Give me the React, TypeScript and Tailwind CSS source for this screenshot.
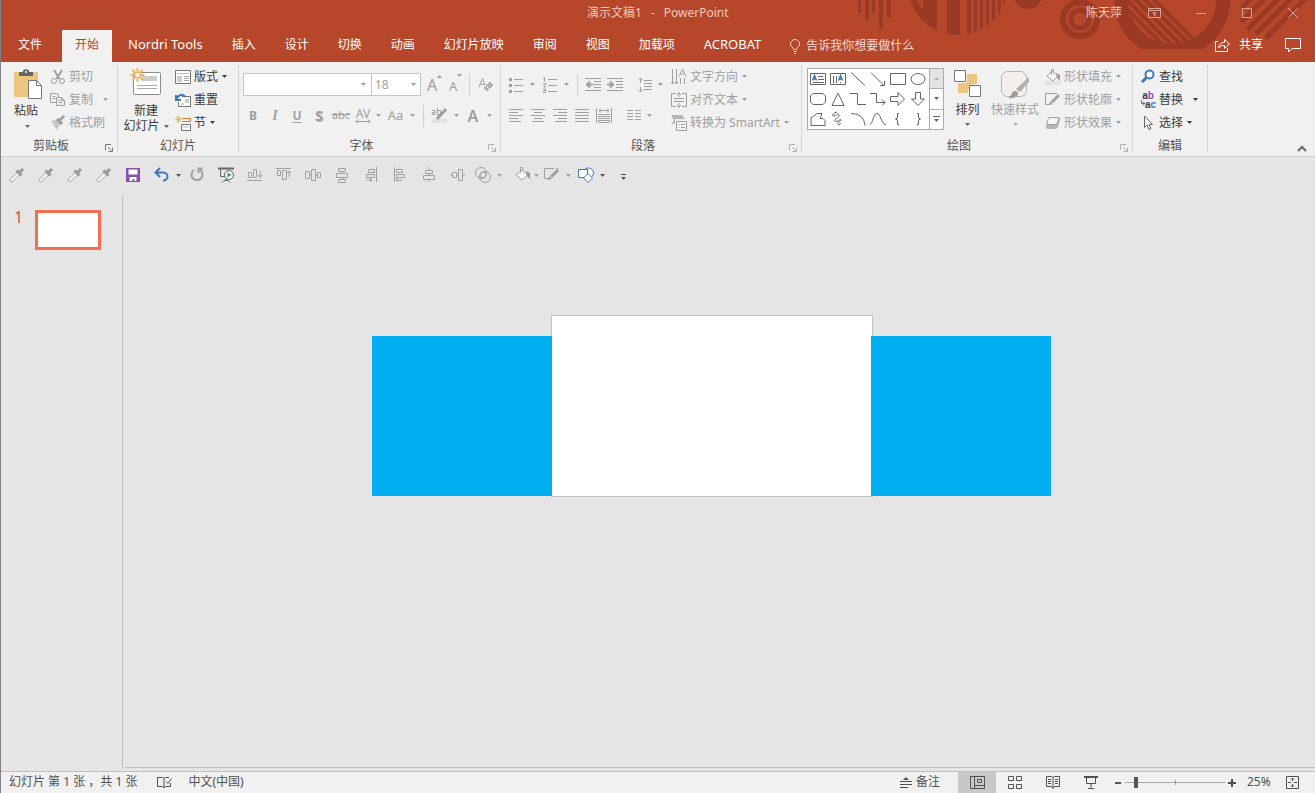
import type { ReactNode } from "react";

const tabs = ["Nordri Tools", "插入", "设计", "切换", "动画", "幻灯片放映", "审阅", "视图", "加载项", "ACROBAT"];

type IconProps = { w?: number; h?: number; className?: string; children: ReactNode };

function Icon({ w = 16, h = 16, className = "", children }: IconProps) {
  return (
    <svg width={w} height={h} viewBox={`0 0 ${w} ${h}`} fill="none" stroke="currentColor" className={`shrink-0 ${className}`} aria-hidden="true">
      {children}
    </svg>
  );
}

function Caret({ className = "" }: { className?: string }) {
  return (
    <Icon w={5} h={3} className={className}>
      <path d="M0 0h5L2.500 3z" fill="currentColor" stroke="none" />
    </Icon>
  );
}

function Small({ icon, label, caret, disabled, caretGap = "ml-1" }: { icon: ReactNode; label: string; caret?: boolean; disabled?: boolean; caretGap?: string }) {
  return (
    <button className={`flex h-[23px] items-center whitespace-nowrap ${disabled ? "text-[#a0a0a0]" : "text-[#3b3b3b]"}`}>
      {icon}
      <span className="ml-[3px]">{label}</span>
      {caret && <Caret className={caretGap} />}
    </button>
  );
}

function Group({ title, width, launcher, children }: { title: string; width: string; launcher?: "dark" | "light"; children: ReactNode }) {
  return (
    <section className={`flex shrink-0 flex-col border-r border-[#d4d4d4] ${width}`}>
      <div className="flex h-[69px]">{children}</div>
      <div className="mt-[2px] flex h-4 items-center">
        <span className={`flex-1 pt-1 text-center text-[#555] ${launcher ? "pr-1" : ""}`}>{title}</span>
        {launcher && (
          <button aria-label={`${title}设置`} className={`mr-1 mt-2 w-2 ${launcher === "dark" ? "text-[#777]" : "text-[#b0b0b0]"}`}>
            <Icon w={8} h={8}>
              <path d="M.5 6V.5H6M3 3l3.500 3.500M7.500 3.500v4h-4" />
            </Icon>
          </button>
        )}
      </div>
    </section>
  );
}

function Bar() {
  return <span className="h-[22px] w-px shrink-0 bg-[#d0d0d0]" />;
}

function Tool({ label, width = "w-[22px]", children }: { label: string; width?: string; children: ReactNode }) {
  return (
    <button aria-label={label} className={`flex h-[22px] shrink-0 items-center justify-center ${width}`}>
      {children}
    </button>
  );
}

function HeaderArt() {
  return (
    <svg width="465" height="50" viewBox="850 0 465 50" className="absolute right-0 top-0 text-[#9b3a24]" fill="currentColor" aria-hidden="true">
      <defs>
        <clipPath id="disc">
          <circle cx="958" cy="-15" r="50" />
        </clipPath>
        <clipPath id="ring">
          <circle cx="1172" cy="0" r="46" />
        </clipPath>
        <clipPath id="flat">
          <path d="M1100 0h140v49h-140z" />
        </clipPath>
      </defs>
      <path d="M858 0h3v13h-3zM865 0h4v21h-4zM872 0h3v13h-3zM879 0h4v29h-4zM887 0h4v18h-4z" />
      <g clipPath="url(#disc)">
        <path d="M909 0h7l7 10V0h14v40h-30zM947 0h13v40h-13zM967 0h4v40h-4zM974 0h3v40h-3zM980 0h3v40h-3zM986 0h3v40h-3zM992 0h3v40h-3zM998 0h3v40h-3zM1003 0h3v40h-3z" />
      </g>
      <circle cx="1028" cy="-5" r="14" />
      <g fill="none" stroke="currentColor">
        <circle cx="1080" cy="19" r="17" strokeWidth="6" />
        <circle cx="1080" cy="19" r="9" strokeWidth="5" />
        <g clipPath="url(#flat)">
          <circle cx="1172" cy="0" r="51" strokeWidth="14" />
        </g>
        <g clipPath="url(#ring)" strokeWidth="4">
          <path d="M1112-6l56 56M1121-6l56 56M1130-6l56 56M1139-6l56 56M1148-6l56 56" />
        </g>
        <path d="M1254-4l-12 12M1267-4l-26 26M1281-4l-34 34M1294-4l-38 38M1308-4l-42 42" strokeWidth="5" />
      </g>
    </svg>
  );
}

function Header() {
  return (
    <header className="relative bg-[#b7472a] text-white">
      <HeaderArt />
      <div className="relative flex h-[26px] items-center text-[#f3c9bc]">
        <h1 className="flex flex-1 gap-[9px] pl-[586px]">
          <span>演示文稿1</span>
          <span>-</span>
          <span>PowerPoint</span>
        </h1>
        <span className="mr-[26px]">陈天萍</span>
        <div className="flex items-center gap-[34px] pr-4 text-[#d9a393]">
          <button aria-label="功能区显示选项">
            <Icon w={13} h={12}>
              <path d="M.5 1.500h12v9H.5zM.5 3.500h12M6.500 9V5M4.500 7l2-2 2 2" />
            </Icon>
          </button>
          <button aria-label="最小化">
            <Icon w={12} h={12}>
              <path d="M1 6.500h10" />
            </Icon>
          </button>
          <button aria-label="最大化">
            <Icon w={12} h={12}>
              <path d="M1.500 1.500h9v9h-9z" />
            </Icon>
          </button>
          <button aria-label="关闭">
            <Icon w={12} h={12}>
              <path d="M1 1l10 10M11 1L1 11" />
            </Icon>
          </button>
        </div>
      </div>
      <nav className="relative flex h-9 items-end pl-1">
        <button className="mr-[7px] h-8 px-[13px] pb-[2px]">文件</button>
        <button className="mr-[2px] h-8 bg-[#f1f1f1] px-[13px] pb-[2px] text-[#b7472a]">开始</button>
        <div className="ml-px flex gap-[3px]">
          {tabs.map((tab) => (
            <button key={tab} className={`h-8 whitespace-nowrap px-[13px] pb-[2px] ${/^[A-Z]/.test(tab) ? "text-[13px]" : ""}`}>
              {tab}
            </button>
          ))}
        </div>
        <button className="ml-4 flex h-8 items-center gap-[6px] whitespace-nowrap text-[#f6dcd4]">
          <Icon w={10} h={15}>
            <path d="M3.500 10.500c0-2-3-3-3-5.500a4.500 4.500 0 0 1 9 0c0 2.500-3 3.500-3 5.500zM3.500 12.500h3M4 14.500h2" />
          </Icon>
          告诉我你想要做什么
        </button>
        <div className="ml-auto flex h-8 items-center pb-[2px] pr-[14px]">
          <button className="flex items-center gap-2">
            <Icon w={16} h={14}>
              <path d="M3 3.500H.500v10h12V10M3.500 10c.5-4 3-5.500 6-5.500v-3l5 4.500-5 4.500v-3c-3 0-4.500.5-6 2.500z" />
            </Icon>
            共享
          </button>
          <button aria-label="批注" className="ml-[22px]">
            <Icon w={16} h={15}>
              <path d="M.5.500h15v10H7L3.500 14v-3.500h-3z" />
            </Icon>
          </button>
        </div>
      </nav>
    </header>
  );
}

function ClipboardGroup() {
  return (
    <Group title="剪贴板" width="w-[117px]" launcher="dark">
      <button className="ml-[13px] flex w-7 flex-col items-start pt-1 text-[#3b3b3b]">
        <Icon w={28} h={30}>
          <g stroke="none">
            <path d="M0 3h24v25H0z" fill="#ecc57f" />
            <path d="M5 7V3h4V1.500Q12 -1 15 1.500V3h4v4z" fill="#666" />
            <circle cx="12" cy="3" r="1" fill="#fff" />
          </g>
          <path d="M14.500 11.500h8l5 5v13h-13z" fill="#fff" stroke="#777" />
          <path d="M22.500 11.500v5h5" stroke="#777" />
        </Icon>
        <span className="mt-1 h-4 whitespace-nowrap leading-4">粘贴</span>
        <Caret className="ml-[11px] mt-[6px] text-[#666]" />
      </button>
      <div className="ml-2">
        <Small
          disabled
          label="剪切"
          icon={
            <Icon>
              <path d="M4 1l5.500 9M12 1L6.500 10" strokeWidth="2" />
              <circle cx="4" cy="12" r="2.500" />
              <circle cx="12" cy="12" r="2.500" />
            </Icon>
          }
        />
        <Small
          disabled
          label="复制"
          caret
          caretGap="ml-[10px]"
          icon={
            <Icon>
              <path d="M6 10.500H.500v-9h6l2 2V5M2.500 4.500h3M2.500 6.500h3M6.500 5.500h5l3 3v5h-8zM8.500 8.500h2M8.500 10.500h4M11.500 5.500v3h3" />
            </Icon>
          }
        />
        <Small
          disabled
          label="格式刷"
          icon={
            <Icon>
              <path d="M1 6l5-1 4 4-3 6zM6 5l2-2 5 5-3 2z" fill="#c6c6c6" stroke="none" />
              <path d="M7 4l5 5M10 5l4-4" strokeWidth="3" />
            </Icon>
          }
        />
      </div>
    </Group>
  );
}

function SlidesGroup() {
  return (
    <Group title="幻灯片" width="w-[121px]">
      <button className="ml-[5px] flex w-[46px] flex-col items-center pt-[3px] text-[#3b3b3b]">
        <Icon w={32} h={28}>
          <rect x="3.500" y="4.500" width="27" height="22" rx="1" fill="#fff" stroke="#8c8c8c" />
          <path d="M12 8h15v5H12z" fill="#ccc" stroke="none" />
          <path d="M7 17.500h20M7 20.500h20" stroke="#aaa" />
          <path d="M7.500 0v14M.500 7h14M2.500 2l10 10M12.500 2l-10 10" stroke="#ecb95e" strokeWidth="2" />
          <circle cx="7.500" cy="7" r="2" fill="#fff" stroke="none" />
        </Icon>
        <span className="mt-[7px] h-[15px] leading-[15px]">新建</span>
        <span className="flex h-4 items-center whitespace-nowrap leading-4">
          幻灯片
          <Caret className="ml-1 text-[#666]" />
        </span>
      </button>
      <div className="ml-[6px]">
        <Small
          label="版式"
          caret
          icon={
            <Icon className="text-[#777]">
              <path d="M.5 1.500h15v13H.500z" fill="#fff" />
              <path d="M2 4.500h12" stroke="#bbb" />
              <path d="M2 7h5v6H2z" fill="#ccc" stroke="none" />
              <path d="M9 7.500h5M9 9.500h5M9 11.500h5" stroke="#aaa" />
            </Icon>
          }
        />
        <Small
          label="重置"
          icon={
            <Icon className="text-[#777]">
              <path d="M7 4.500h8.500v10H3.500V10" fill="#fff" />
              <path d="M6 11h3v2H6zM10 7h4v4h-4z" fill="#ccc" stroke="none" />
              <path d="M1.500 8c1-5 6-7 9-3M1 3v5h5" stroke="#3f78b5" strokeWidth="2" />
            </Icon>
          }
        />
        <Small
          label="节"
          caret
          icon={
            <Icon className="text-[#777]">
              <path d="M7 3.500h8.500v3H7" stroke="#e07b28" />
              <path d="M6.500 9.500h9v6h-9z" fill="#fff" />
              <path d="M8 12h6" stroke="#bbb" />
              <path d="M3.500 1v7M0 4.500h7M1 2l5 5M6 2L1 7" stroke="#ecb95e" />
            </Icon>
          }
        />
      </div>
    </Group>
  );
}

function FontGroup() {
  return (
    <Group title="字体" width="w-[262px]" launcher="light">
      <div className="flex flex-col gap-2 pl-1 pt-[8px] text-[#a0a0a0]">
        <div className="flex h-[23px] items-center">
          <div className="relative h-full w-[129px]">
            <select aria-label="字体" className="h-full w-full appearance-none border border-[#c6c6c6] bg-white">
              <option></option>
            </select>
            <Caret className="absolute right-[6px] top-[10px]" />
          </div>
          <div className="relative -ml-px h-full w-[50px]">
            <select aria-label="字号" defaultValue="18" className="h-full w-full appearance-none border border-[#c6c6c6] bg-white pl-[3px]">
              <option>18</option>
            </select>
            <Caret className="absolute right-[5px] top-[10px]" />
          </div>
          <button aria-label="增大字号" className="ml-[6px] flex w-[22px] items-start">
            <span className="text-base leading-5">A</span>
            <Icon w={5} h={3}>
              <path d="M0 3h5L2.500 0z" fill="currentColor" stroke="none" />
            </Icon>
          </button>
          <button aria-label="减小字号" className="flex w-5 items-start">
            <span className="pt-[2px] text-[13px] leading-5">A</span>
            <Caret />
          </button>
          <Bar />
          <Tool label="清除格式" width="w-[31px]">
            <Icon>
              <path d="M1 10L4.500 1.500 8 10M2.500 7.500h4" />
              <path d="M5 11l7-7 4 4-7 7z" fill="#b0b0b0" stroke="#f1f1f1" />
              <path d="M6 12l3 3M8 9l3 3" stroke="#f1f1f1" />
            </Icon>
          </Tool>
        </div>
        <div className="-ml-px flex h-[23px] items-center">
          <Tool label="加粗">
            <b>B</b>
          </Tool>
          <Tool label="倾斜">
            <i className="font-serif text-sm font-semibold">I</i>
          </Tool>
          <Tool label="下划线">
            <span className="font-bold underline underline-offset-2">U</span>
          </Tool>
          <Tool label="阴影">
            <b className="text-sm [text-shadow:1px_1px_1px_#bbb]">S</b>
          </Tool>
          <Tool label="删除线">
            <s className="text-[11px]">abc</s>
          </Tool>
          <Tool label="字符间距">
            <span className="flex flex-col items-center leading-[11px]">
              AV
              <Icon w={16} h={5}>
                <path d="M1 2.500h14M3 .5l-2 2 2 2M13 .5l2 2-2 2" />
              </Icon>
            </span>
          </Tool>
          <Caret className="ml-[2px]" />
          <Tool label="更改大小写" width="w-[29px]">
            <span className="text-[13px]">Aa</span>
          </Tool>
          <Caret className="mr-2" />
          <Bar />
          <Tool label="突出显示" width="w-[30px]">
            <Icon w={16} h={17}>
              <path d="M0 12h16v4H0z" fill="#e6e0e4" stroke="none" />
              <path d="M1 3.500h3v4H1.500L1 7l.5-1.500H4M6.500 1v6.500h3v-4h-3" />
              <path d="M15 2L6 12" strokeWidth="3" />
            </Icon>
          </Tool>
          <Caret />
          <Tool label="字体颜色" width="w-7">
            <span className="text-base font-semibold">A</span>
          </Tool>
          <Caret />
        </div>
      </div>
    </Group>
  );
}

function Lines({ d }: { d: string }) {
  return (
    <Icon w={14} h={13}>
      <path d={d} />
    </Icon>
  );
}

function ParagraphGroup() {
  return (
    <Group title="段落" width="w-[301px]" launcher="light">
      <div className="flex w-[163px] flex-col gap-2 pl-1 pt-[8px] text-[#a0a0a0]">
        <div className="flex h-[23px] items-center">
          <Tool label="项目符号">
            <Icon w={14} h={16}>
              <path d="M5 2.500h9M5 8.500h9M5 14.500h9" />
              <path d="M0 1h3v3H0zM0 7h3v3H0zM0 13h3v3H0z" fill="currentColor" stroke="none" />
            </Icon>
          </Tool>
          <Caret className="ml-[3px]" />
          <Tool label="编号" width="w-[29px]">
            <Icon w={14} h={16}>
              <path d="M5 2.500h9M5 8.500h9M5 14.500h9" />
              <path d="M0 1.500l1.500-1v4M.0 6.500h2.500v1.500L.500 10H3M0 12h2.500v3.500H0M.500 13.500H2" />
            </Icon>
          </Tool>
          <Caret className="mr-2" />
          <Bar />
          <Tool label="减少缩进" width="w-[30px]">
            <Icon w={16} h={13}>
              <path d="M0 .5h16M9 3.500h7M9 6.500h7M9 9.500h7M0 12.500h16" />
              <path d="M2 6.500h6M5 3.500l-3 3 3 3" strokeWidth="2" />
            </Icon>
          </Tool>
          <Tool label="增加缩进" width="w-[14px]">
            <Icon w={16} h={13}>
              <path d="M0 .5h16M9 3.500h7M9 6.500h7M9 9.500h7M0 12.500h16" />
              <path d="M0 6.500h6M3 3.500l3 3-3 3" strokeWidth="2" />
            </Icon>
          </Tool>
          <span className="ml-2">
            <Bar />
          </span>
          <Tool label="行距" width="w-[30px]">
            <Icon w={14} h={16}>
              <path d="M6 3.500h8M6 6.500h8M6 9.500h8M6 12.500h8M2.500 1v5M2.500 10v5M0 3.500L2.500 1 5 3.500M0 12.500L2.500 15 5 12.500" />
            </Icon>
          </Tool>
          <Caret className="-ml-[2px]" />
        </div>
        <div className="flex h-[23px] items-center">
          <Tool label="左对齐">
            <Lines d="M0 .5h14M0 3.500h9M0 6.500h14M0 9.500h9M0 12.500h12" />
          </Tool>
          <Tool label="居中">
            <Lines d="M0 .5h14M3 3.500h8M0 6.500h14M3 9.500h8M1 12.500h12" />
          </Tool>
          <Tool label="右对齐">
            <Lines d="M0 .5h14M5 3.500h9M0 6.500h14M5 9.500h9M2 12.500h12" />
          </Tool>
          <Tool label="两端对齐">
            <Lines d="M0 .5h14M0 3.500h14M0 6.500h14M0 9.500h14M0 12.500h14" />
          </Tool>
          <Tool label="分散对齐">
            <Icon w={16} h={15}>
              <path d="M.5 0v15M15.500 0v15M2 6.500h12M2 8.500h12M2 10.500h12M2 12.500h12M2 14.500h12M3 2.500h10M5 .5l-2 2 2 2M11 .5l2 2-2 2" />
            </Icon>
          </Tool>
          <span className="ml-1">
            <Bar />
          </span>
          <Tool label="分栏" width="w-[30px]">
            <Lines d="M0 1.500h6M0 4.500h6M0 7.500h6M0 10.500h6M8 1.500h6M8 4.500h6M8 7.500h6M8 10.500h6" />
          </Tool>
          <Caret className="-ml-[2px]" />
        </div>
      </div>
      <div className="ml-[7px]">
        <Small
          disabled
          caret
          label="文字方向"
          icon={
            <Icon>
              <path d="M1.500 0v15M5.500 0v15M9.500 9v6M13.500 9v6M0 13l1.500 2L3 13M4 13l1.500 2L7 13M8 7.500L11.500 0 15 7.500M9.500 5h4" />
            </Icon>
          }
        />
        <Small
          disabled
          caret
          label="对齐文本"
          icon={
            <Icon>
              <path d="M5 1.500H.500v13H5M11 1.500h4.500v13H11M3 6.500h10M3 9.500h10M8 0v5M8 11v5M6 3l2-2 2 2M6 13l2 2 2-2" />
            </Icon>
          }
        />
        <Small
          disabled
          caret
          label="转换为 SmartArt"
          icon={
            <Icon>
              <path d="M0 0h11l3 4H4v4L0 10l3-5z" fill="#b5b5b5" stroke="none" />
              <path d="M5.500 6.500h10v9h-10z" fill="#f8f3f0" />
              <path d="M7.500 9.500h1M10 9.500h4M7.500 12.500h1M10 12.500h4" />
            </Icon>
          }
        />
      </div>
    </Group>
  );
}

const shapes = [
  { name: "文本框", d: "M.5 2.500h15v11H.500zM8 5.500h5M8 8.500h6M3 11.500h11", blue: "M2.500 9.500L4.500 4.500l2 5M3.500 8h2" },
  { name: "竖排文本框", d: "M.5 2.500h15v11H.500zM3.500 5v7M6.500 5v7M10.500 11v1", blue: "M8.500 9.500L10.500 4.500l2 5M9.500 8h2" },
  { name: "直线", d: "M1 1.500l14 13" },
  { name: "箭头", d: "M1 1.500l13 13M10 14.500h4.500V10" },
  { name: "矩形", d: "M.5 2.500h15v11H.500z" },
  { name: "椭圆", d: "M1 8a7 5.500 0 0 1 14 0a7 5.500 0 0 1-14 0z" },
  { name: "圆角矩形", d: "M3 2.500h10l2.500 2.500v6L13 13.500H3L.500 11V5z" },
  { name: "三角形", d: "M2 14.500L8 2l6 12.500z" },
  { name: "肘形连接符", d: "M0 2.500h7.500v11H16" },
  { name: "肘形箭头", d: "M0 2.500h6.500v9H15M12 8.500l3 3-3 3" },
  { name: "右箭头", d: "M.5 5.500H8V1.500l6.500 6.500L8 14.500V10.500H.500z" },
  { name: "下箭头", d: "M5.500 1.500h5V8h4L8 14.500 1.500 8h4z" },
  { name: "任意多边形", d: "M1 14.500V7l6-4.500h5l-2 5h3l2 2v5z" },
  { name: "自由曲线", d: "M7 1C3 2 1 5 4 5s4-4 5-1-6 4-4 6 6-3 6-1-4 2-3 4 3 0 2-1" },
  { name: "弧形", d: "M1 2.500q13 0 14 12" },
  { name: "曲线", d: "M0 13C3 13 3 2.500 7 2.500s4 11 9 11" },
  { name: "左大括号", d: "M9 2.500H7.500V7L5.500 8l2 1v4.500H9" },
  { name: "右大括号", d: "M7 2.500h1.500V7l2 1-2 1v4.500H7" },
];

function DrawingGroup() {
  return (
    <Group title="绘图" width="w-[331px]" launcher="light">
      <div className="ml-[5px] mt-[3px] flex h-[62px] w-[137px] border border-[#ababab] bg-white">
        <div className="grid w-[120px] grid-cols-6 grid-rows-3">
          {shapes.map((s) => (
            <button key={s.name} aria-label={s.name} className="flex items-center justify-center text-[#666]">
              <Icon>
                <path d={s.d} />
                {s.blue && <path d={s.blue} stroke="#3f78b5" strokeWidth="1.500" />}
              </Icon>
            </button>
          ))}
        </div>
        <div className="ml-px flex flex-1 flex-col divide-y divide-[#ababab] border-l border-[#ababab] text-[#666]">
          <button aria-label="上一行" className="flex flex-1 items-center justify-center bg-[#e4e2e3] text-[#b0b0b0]">
            <Icon w={5} h={3}>
              <path d="M0 3h5L2.500 0z" fill="currentColor" stroke="none" />
            </Icon>
          </button>
          <button aria-label="下一行" className="flex flex-1 items-center justify-center">
            <Caret />
          </button>
          <button aria-label="其他" className="flex flex-1 flex-col items-center justify-center gap-[2px]">
            <span className="h-px w-[7px] bg-[#666]" />
            <Caret />
          </button>
        </div>
      </div>
      <button className="ml-[9px] flex w-[29px] flex-col items-center pt-[5px] text-[#3b3b3b]">
        <Icon w={28} h={28}>
          <path d="M13 4h10v10h-5v5h-4v4H4V13h9z" fill="#ecc57f" stroke="none" />
          <path d="M.5.500h11v11H.500zM15.500 15.500h11v11h-11z" fill="#fff" stroke="#777" />
        </Icon>
        <span className="mt-1 h-4 whitespace-nowrap leading-4">排列</span>
        <Caret className="mt-[5px] text-[#666]" />
      </button>
      <button className="ml-2 flex w-[50px] flex-col items-center pt-[5px] text-[#a0a0a0]">
        <Icon w={30} h={30}>
          <rect x="1.500" y="1.500" width="25" height="25" rx="6" fill="#f5efec" stroke="#b5b5b5" />
          <path d="M29 7v5l-9 10-4-3z" fill="#b0b0b0" stroke="none" />
          <path d="M8 28c4-1 3-8 8-7 5 2 0 9-8 7z" fill="#9c9c9c" stroke="none" />
        </Icon>
        <span className="mt-[2px] h-4 whitespace-nowrap leading-4">快速样式</span>
        <Caret className="mt-[5px] text-[#b0b0b0]" />
      </button>
      <div className="ml-[5px]">
        <Small
          disabled
          caret
          label="形状填充"
          icon={
            <Icon>
              <path d="M0 12h16v4H0z" fill="#e6e0e1" stroke="none" />
              <path d="M2 7l5-5 6 5-5 5zM6.500 6V.500h2V4" fill="#faf8f7" />
              <path d="M11 4l4 2v6l-3-3z" fill="#a0a0a0" stroke="none" />
            </Icon>
          }
        />
        <Small
          disabled
          caret
          label="形状轮廓"
          icon={
            <Icon>
              <path d="M12 1.500H.500v11h5" />
              <path d="M14 3l-7 7" strokeWidth="3" />
              <path d="M4 13l1-4 3 3z" fill="#a0a0a0" stroke="none" />
            </Icon>
          }
        />
        <Small
          disabled
          caret
          label="形状效果"
          icon={
            <Icon>
              <path d="M4 2h9q3 0 2 3l-2 7q-1 2-3 2H3q-3 0-2-3z" fill="#b5b5b5" stroke="none" />
              <path d="M5 2.500h7q2 0 1.500 2l-1 3q-.5 2-2 2H3q-2 0-1-2l1-3q.5-2 2-2z" fill="#f8f4f2" />
            </Icon>
          }
        />
      </div>
    </Group>
  );
}

function EditingGroup() {
  return (
    <Group title="编辑" width="w-[75px]">
      <div className="ml-[7px]">
        <Small
          label="查找"
          icon={
            <Icon className="text-[#3f78b5]">
              <circle cx="9.500" cy="5.500" r="4" strokeWidth="2" fill="#fff" />
              <path d="M6.500 8.500L2 13" strokeWidth="3" />
            </Icon>
          }
        />
        <Small
          label="替换"
          caret
          caretGap="ml-[10px]"
          icon={
            <span className="flex w-4 flex-col font-['Liberation_Sans',sans-serif] text-[10px] font-bold leading-[9px]" aria-hidden="true">
              <span>
                a<span className="text-[#8b52b0]">b</span>
              </span>
              <span className="flex justify-end">
                <Icon w={4} h={6} className="text-[#3f78b5]">
                  <path d="M.5 0v3.500H4M2 2l2 1.500L2 5" />
                </Icon>
                a<span className="text-[#3f78b5]">c</span>
              </span>
            </span>
          }
        />
        <Small
          label="选择"
          caret
          icon={
            <Icon className="text-[#666]">
              <path d="M4.500 1v11.500l2.500-2.500 2 4.500 2-1-2-4h3.500z" fill="#fff" />
            </Icon>
          }
        />
      </div>
    </Group>
  );
}

function Ribbon() {
  return (
    <div className="flex border-b border-[#d2d2d2] bg-[#f1f1f1] pb-1 pt-[3px]">
      <ClipboardGroup />
      <SlidesGroup />
      <FontGroup />
      <ParagraphGroup />
      <DrawingGroup />
      <EditingGroup />
      <button aria-label="折叠功能区" className="ml-auto mr-2 self-end text-[#666]">
        <Icon w={10} h={7}>
          <path d="M1 6l4-4 4 4" strokeWidth="2" />
        </Icon>
      </button>
    </div>
  );
}

function Eyedropper() {
  return (
    <Icon>
      <path d="M1.500 14.500c-1-1 0-2.500 1-3.500l6-6 2.500 2.500-6 6c-1 1-2.500 2-3.500 1z" fill="#f3f1f1" stroke="#a8a8a8" />
      <path d="M7.500 3.500l5 5M10 6l4-4" stroke="#999" strokeWidth="3" />
    </Icon>
  );
}

const alignIcons = [
  { name: "底端对齐", d: "M0 13.500h15M1.500 5.500h3v5h-3zM6.500 2.500h3v8h-3zM13 4v6M11 8l2 2.500L15 8" },
  { name: "顶端对齐", d: "M0 1.500h15M1.500 3.500h3v5h-3zM6.500 3.500h4v9h-4zM13 10V4M11 6l2-2 2 2" },
  { name: "横向分布", d: "M.5 4.500h4v7h-4zM6.500 2.500h4v11h-4zM12.500 5.500h3v5h-3zM4 8h2M11 8h2" },
  { name: "纵向分布", d: "M4.500 1.500h7v3h-7zM2.500 6.500h11v4h-11zM4.500 12.500h7v3h-7zM8 4.500v2M8 10.500v2" },
  { name: "右对齐", d: "M13.500 0v15M5.500 2.500h6v3h-6zM3.500 7.500h8v3h-8zM3 13h6M7 11l2 2-2 2" },
  { name: "左对齐", d: "M2.500 0v15M4.500 2.500h6v3h-6zM4.500 7.500h8v3h-8zM4 13h6M6 11l-2 2 2 2" },
  { name: "水平居中", d: "M8 0v3M8 6v2M8 12v3M4.500 3.500h7v3h-7zM2.500 8.500h11v4h-11z" },
  { name: "垂直居中", d: "M0 8h2M6 8h2M12 8h3M2.500 5.500h4v5h-4zM8.500 2.500h4v11h-4z" },
];

function QuickAccess() {
  return (
    <div className="flex h-[39px] items-center pb-[3px] pl-px text-[#a0a0a0]">
      {["取色器 1", "取色器 2", "取色器 3", "取色器 4"].map((name) => (
        <Tool key={name} label={name} width="w-[29px]">
          <Eyedropper />
        </Tool>
      ))}
      <Tool label="保存" width="w-[29px]">
        <Icon w={14} h={14}>
          <path d="M0 0h14v14H0z" fill="#8552a5" stroke="none" />
          <path d="M2.500 1.500h9v5h-9zM3.500 9h7v4h-2v-2h-2v2h-3z" fill="#fff" stroke="none" />
        </Icon>
      </Tool>
      <Tool label="撤消" width="w-[29px]">
        <Icon className="text-[#3f78b5]">
          <path d="M2 5.500h7c6 0 6 8 0 8M6 1L1.500 5.500 6 10" strokeWidth="2" />
        </Icon>
      </Tool>
      <Caret className="mr-px text-[#555]" />
      <Tool label="重复" width="w-[29px]">
        <Icon>
          <path d="M5 3a5.500 5.500 0 1 0 6 0M14 1.500H9.500V6" strokeWidth="2" />
        </Icon>
      </Tool>
      <Tool label="从头开始放映" width="w-[29px]">
        <Icon className="text-[#666]">
          <path d="M0 1.500h16" strokeWidth="2" />
          <path d="M2.500 2v7.500H7M8 12v1M4 15.500l2-2h4l2 2" />
          <circle cx="11" cy="8" r="4.500" fill="#f5f5f5" />
          <path d="M9.500 5.500v5L13.500 8z" fill="#3d9970" stroke="none" />
        </Icon>
      </Tool>
      {alignIcons.map((icon) => (
        <Tool key={icon.name} label={icon.name} width="w-[29px]">
          <Icon>
            <path d={icon.d} />
          </Icon>
        </Tool>
      ))}
      <Tool label="合并形状">
        <Icon>
          <circle cx="6" cy="6" r="5.500" />
          <circle cx="10" cy="10" r="5.500" />
          <circle cx="8" cy="8" r="3" />
        </Icon>
      </Tool>
      <Caret className="ml-[3px] mr-[10px]" />
      <Tool label="形状填充">
        <Icon>
          <path d="M1 8l6-5 6 5-6 5zM5.500 6V.500h2V4" fill="#faf8f7" />
          <path d="M11 4l4 2v6l-3-3z" fill="#999" stroke="none" />
        </Icon>
      </Tool>
      <Caret className="mr-[2px]" />
      <Tool label="形状轮廓">
        <Icon>
          <path d="M10 1.500H.500v10h4M12.500 1.500h2" />
          <path d="M14 3l-7 7" strokeWidth="3" />
          <path d="M4 13l1-4 3 3z" fill="#a0a0a0" stroke="none" />
        </Icon>
      </Tool>
      <Caret className="ml-[3px] mr-1" />
      <Tool label="形状">
        <Icon className="text-[#3f78b5]">
          <circle cx="10.500" cy="6" r="5" fill="#fff" />
          <path d="M.5 2.500h9v8h-9z" fill="#fff" />
          <path d="M10 6.500l4.500 4.500-4.500 4.500L5.500 11z" fill="#fff" />
        </Icon>
      </Tool>
      <Caret className="ml-[3px] text-[#555]" />
      <button aria-label="自定义快速访问工具栏" className="ml-4 flex flex-col items-center gap-[2px] pt-1 text-[#555]">
        <span className="h-px w-[5px] bg-[#555]" />
        <Caret />
      </button>
    </div>
  );
}

function StatusBar() {
  return (
    <footer className="flex h-[22px] items-center border-t border-[#c0c0c0] bg-[#f1f1f1] text-[#505050]">
      <span className="ml-2 whitespace-nowrap pb-px">幻灯片 第 1 张 ，共 1 张</span>
      <button aria-label="拼写检查" className="ml-5">
        <Icon w={15} h={13}>
          <path d="M7 2.500L5.500 1.500h-5v9h5L7 12l1.500-1.500h5V7M7 2.500V12M7 2.500l1.500-1H12M9 5.500l2 2 3.500-5" />
        </Icon>
      </button>
      <button className="ml-4 whitespace-nowrap pb-[2px]">中文(中国)</button>
      <button className="ml-auto mr-[18px] flex items-center gap-1 whitespace-nowrap pb-px">
        <Icon w={12} h={12}>
          <path d="M0 5.500h12M0 8.500h12M0 11.500h8" />
          <path d="M3 4h6L6 1z" fill="currentColor" stroke="none" />
        </Icon>
        备注
      </button>
      <button aria-label="普通视图" className="flex h-full w-[38px] items-center justify-center bg-[#c8c8c8]">
        <Icon w={15} h={13}>
          <path d="M.5.500h14v12H.500zM4.500.5v12M4.500 9.500h10M7.500 3.500h4v3h-4z" />
        </Icon>
      </button>
      <button aria-label="幻灯片浏览" className="flex w-[38px] justify-center">
        <Icon w={15} h={13}>
          <path d="M.5.500h5v4h-5zM8.500.500h5v4h-5zM.500 8.500h5v4h-5zM8.500 8.500h5v4h-5z" />
        </Icon>
      </button>
      <button aria-label="阅读视图" className="flex w-[38px] justify-center">
        <Icon w={14} h={13}>
          <path d="M7 1.500L5.500.500h-5v10h5l1.500 2 1.500-2h5V.500h-5zM7 1.500V12M2 3.500h3M2 5.500h3M2 7.500h3M9 3.500h3M9 5.500h3M9 7.500h3" />
        </Icon>
      </button>
      <button aria-label="幻灯片放映" className="flex w-[38px] justify-center">
        <Icon w={14} h={13}>
          <path d="M0 1h14" strokeWidth="2" />
          <path d="M2.500 2v5.500h9V2M7 7.500v4M4 12.500h6" />
        </Icon>
      </button>
      <button aria-label="缩小" className="ml-1 flex h-4 w-2 items-center justify-center">
        <span className="h-[2px] w-[6px] bg-[#555]" />
      </button>
      <div className="relative ml-[3px] flex w-[100px] items-center">
        <span className="absolute left-1/2 h-[5px] w-px bg-[#999]" />
        <input
          type="range"
          aria-label="显示比例"
          defaultValue="9"
          className="w-full appearance-none bg-transparent [&::-webkit-slider-runnable-track]:h-px [&::-webkit-slider-runnable-track]:bg-[#aaa] [&::-webkit-slider-thumb]:-mt-[5px] [&::-webkit-slider-thumb]:h-[11px] [&::-webkit-slider-thumb]:w-1 [&::-webkit-slider-thumb]:appearance-none [&::-webkit-slider-thumb]:bg-[#555]"
        />
      </div>
      <button aria-label="放大" className="ml-[3px]">
        <Icon w={8} h={8}>
          <path d="M0 4h8M4 0v8" strokeWidth="2" />
        </Icon>
      </button>
      <span className="ml-[11px] w-[39px] pb-px">25%</span>
      <button aria-label="适应窗口" className="mr-4">
        <Icon w={13} h={13}>
          <path d="M.5.500h12v12H.500zM6.500 2v3M6.500 8v3M2 6.500h3M8 6.500h3M5 3.500L6.500 2 8 3.500M5 9.500L6.500 11 8 9.500" />
        </Icon>
      </button>
    </footer>
  );
}

export default function App() {
  return (
    <div className="flex min-h-screen flex-col border-l border-[#808080] bg-[#e6e5e5] font-['Noto_Sans','Noto_Sans_CJK_SC',sans-serif] text-xs">
      <Header />
      <Ribbon />
      <QuickAccess />
      <main className="flex flex-1 pb-[3px]">
        <aside className="flex w-[122px] shrink-0 items-start border-r border-[#bdbdbd] pl-[13px] pt-[14px]">
          <span className="w-[21px] text-base leading-[14px] text-[#d9573a]">1</span>
          <button aria-label="幻灯片 1" className="h-10 w-[66px] border-3 border-[#f17051] bg-white" />
        </aside>
        <div className="ml-[2px] flex-1 border-b border-[#bdbdbd] pr-[18px] pt-[119px]">
          <div className="flex items-end justify-center">
            <div className="z-10 mb-px h-40 w-[180px] bg-[#00b0f0]" />
            <div className="-ml-px -mr-[2px] h-[182px] w-[322px] border border-[#c4c4c4] bg-white" />
            <div className="z-10 mb-px h-40 w-[180px] bg-[#00b0f0]" />
          </div>
        </div>
      </main>
      <StatusBar />
    </div>
  );
}
